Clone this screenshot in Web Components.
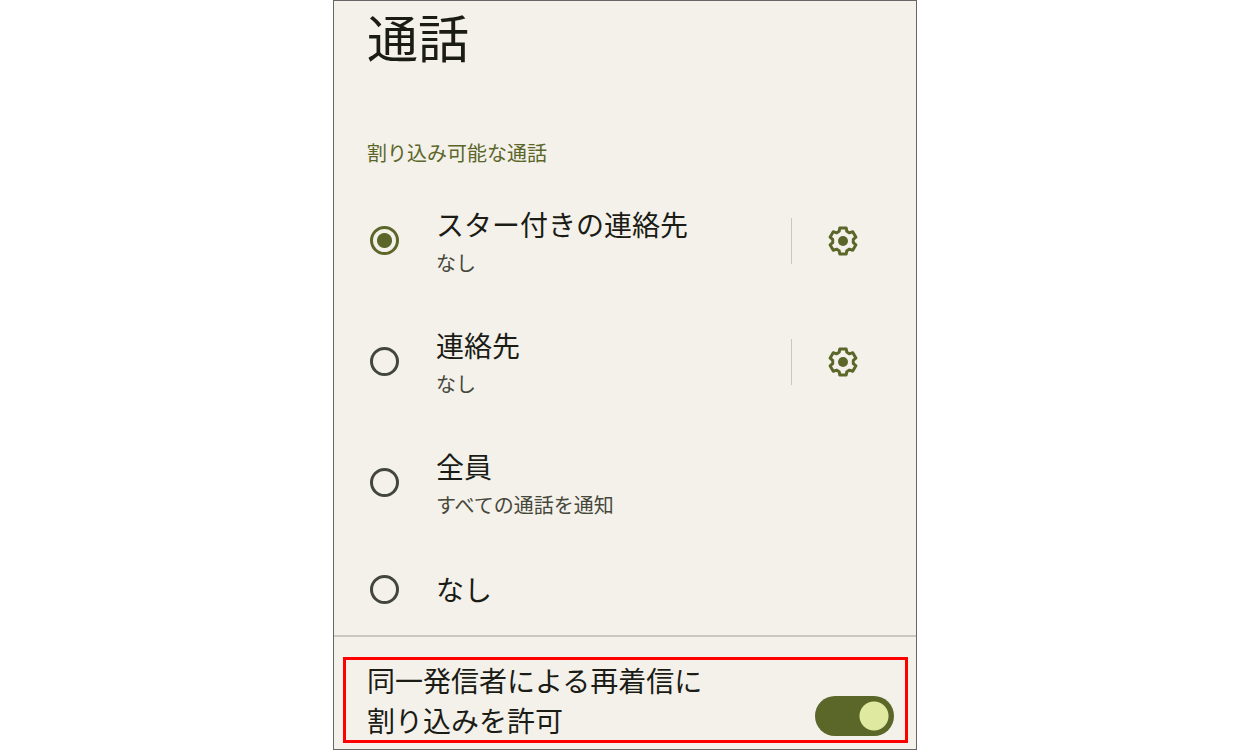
<!DOCTYPE html>
<html lang="ja">
<head>
<meta charset="utf-8">
<meta name="viewport" content="width=device-width, initial-scale=1">
<title>通話</title>
<style>
  body {
    margin: 0;
    background: #fff;
    color: #1b1c16;
    font-family: "Noto Sans CJK JP", "Noto Sans", sans-serif;
  }
</style>
</head>
<body>
<settings-screen heading="通話">
  <option-group heading="割り込み可能な通話">
    <call-option summary="なし" configurable checked>スター付きの連絡先</call-option>
    <call-option summary="なし" configurable>連絡先</call-option>
    <call-option summary="すべての通話を通知">全員</call-option>
    <call-option>なし</call-option>
  </option-group>
  <toggle-row slot="footer" checked>同一発信者による再着信に<br>割り込みを許可</toggle-row>
</settings-screen>

<script>
class SettingsScreen extends HTMLElement {
  connectedCallback() {
    this.attachShadow({ mode: "open" }).innerHTML = `
      <style>
        :host {
          display: flex;
          flex-direction: column;
          box-sizing: border-box;
          max-width: 584px;
          min-height: 100vh;
          margin: 0 auto;
          border: 1px solid #666;
          background: #f4f1ea;
        }
        h1 {
          margin: 0 33px 67px;
          font-size: 51px;
          font-weight: 400;
          line-height: 70px;
        }
        footer {
          padding: 20px 8px 6px 9px;
          border-top: 2px solid #c9c7c0;
        }
      </style>
      <h1></h1>
      <main><slot></slot></main>
      <footer><slot name="footer"></slot></footer>`;
    this.shadowRoot.querySelector("h1").textContent = this.getAttribute("heading");
  }
}

class OptionGroup extends HTMLElement {
  connectedCallback() {
    this.attachShadow({ mode: "open" }).innerHTML = `
      <style>
        :host { display: block; }
        h2 {
          margin: 0 33px 12px;
          color: #5b6629;
          font-size: 20px;
          font-weight: 400;
          line-height: 30px;
        }
      </style>
      <h2 id="heading"></h2>
      <div role="radiogroup" aria-labelledby="heading"><slot></slot></div>`;
    this.shadowRoot.querySelector("h2").textContent = this.getAttribute("heading");
    this.addEventListener("option-chosen", (event) => {
      for (const option of this.querySelectorAll("call-option")) {
        option.checked = option === event.target;
      }
    });
  }
}

class CallOption extends HTMLElement {
  connectedCallback() {
    this.attachShadow({ mode: "open" }).innerHTML = `
      <style>
        :host {
          display: flex;
          align-items: center;
          box-sizing: border-box;
          min-height: 92px;
          padding: 0 22px 0 36px;
        }
        :host([summary]) { min-height: 121px; }
        label {
          display: flex;
          flex: 1;
          align-items: center;
          gap: 37px;
        }
        input {
          flex: none;
          appearance: none;
          width: 29px;
          height: 29px;
          margin: 0;
          border: 3px solid #43463a;
          border-radius: 50%;
        }
        input:checked {
          border-color: #5b6629;
          background: radial-gradient(circle, #5b6629 7px, transparent 8px);
        }
        .text { display: block; }
        .name {
          display: block;
          font-size: 28px;
          line-height: 44px;
        }
        .summary {
          display: block;
          color: #46483c;
          font-size: 20px;
          line-height: 34px;
        }
      </style>
      <label>
        <input type="radio" name="caller">
        <span class="text"><span class="name"><slot></slot></span></span>
      </label>`;
    this.input = this.shadowRoot.querySelector("input");
    this.checked = this.hasAttribute("checked");
    this.input.addEventListener("change", () => {
      this.dispatchEvent(new CustomEvent("option-chosen", { bubbles: true }));
    });
    if (this.hasAttribute("summary")) {
      const summary = document.createElement("span");
      summary.className = "summary";
      summary.textContent = this.getAttribute("summary");
      this.shadowRoot.querySelector(".text").append(summary);
    }
    if (this.hasAttribute("configurable")) {
      this.shadowRoot.append(document.createElement("gear-button"));
    }
  }
  set checked(value) { this.input.checked = value; }
  get checked() { return this.input.checked; }
}

class GearButton extends HTMLElement {
  connectedCallback() {
    const tooth = [[-3.8, -9.7], [-3.2, -13.1], [3.2, -13.1], [3.8, -9.7]];
    const points = [0, 1, 2, 3, 4, 5].flatMap((n) => {
      const c = Math.cos(n * Math.PI / 3), s = Math.sin(n * Math.PI / 3);
      return tooth.map(([x, y]) => `${(x * c - y * s).toFixed(2)},${(x * s + y * c).toFixed(2)}`);
    });
    this.attachShadow({ mode: "open" }).innerHTML = `
      <style>
        :host {
          display: block;
          flex: none;
          border-left: 1px solid #c9c7c0;
        }
        button {
          display: flex;
          align-items: center;
          justify-content: center;
          width: 102px;
          height: 46px;
          padding: 0;
          border: 0;
          background: none;
          color: #5b6629;
        }
      </style>
      <button type="button" aria-label="設定">
        <svg width="32" height="32" viewBox="-16 -16 32 32" aria-hidden="true">
          <polygon points="${points.join(" ")}" fill="none" stroke="currentColor" stroke-width="3" stroke-linejoin="round"/>
          <circle r="5" fill="currentColor"/>
        </svg>
      </button>`;
  }
}

class ToggleRow extends HTMLElement {
  connectedCallback() {
    this.attachShadow({ mode: "open" }).innerHTML = `
      <style>
        :host {
          display: block;
          border: 3px solid #f00;
        }
        label {
          display: flex;
          align-items: flex-end;
          justify-content: space-between;
          padding: 0 11px 0 21px;
          font-size: 28px;
          line-height: 40px;
        }
        input {
          flex: none;
          appearance: none;
          width: 79px;
          height: 40px;
          margin: 0 0 4px;
          border-radius: 20px;
          background: radial-gradient(circle at 20px 50%, #f4f1ea 14px, transparent 15px) #8b8d80;
        }
        input:checked {
          background: radial-gradient(circle at 59px 50%, #dfeaa0 14px, transparent 15px) #5b6629;
        }
      </style>
      <label>
        <span><slot></slot></span>
        <input type="checkbox" role="switch">
      </label>`;
    this.shadowRoot.querySelector("input").checked = this.hasAttribute("checked");
  }
}

customElements.define("gear-button", GearButton);
customElements.define("call-option", CallOption);
customElements.define("option-group", OptionGroup);
customElements.define("toggle-row", ToggleRow);
customElements.define("settings-screen", SettingsScreen);
</script>
</body>
</html>
